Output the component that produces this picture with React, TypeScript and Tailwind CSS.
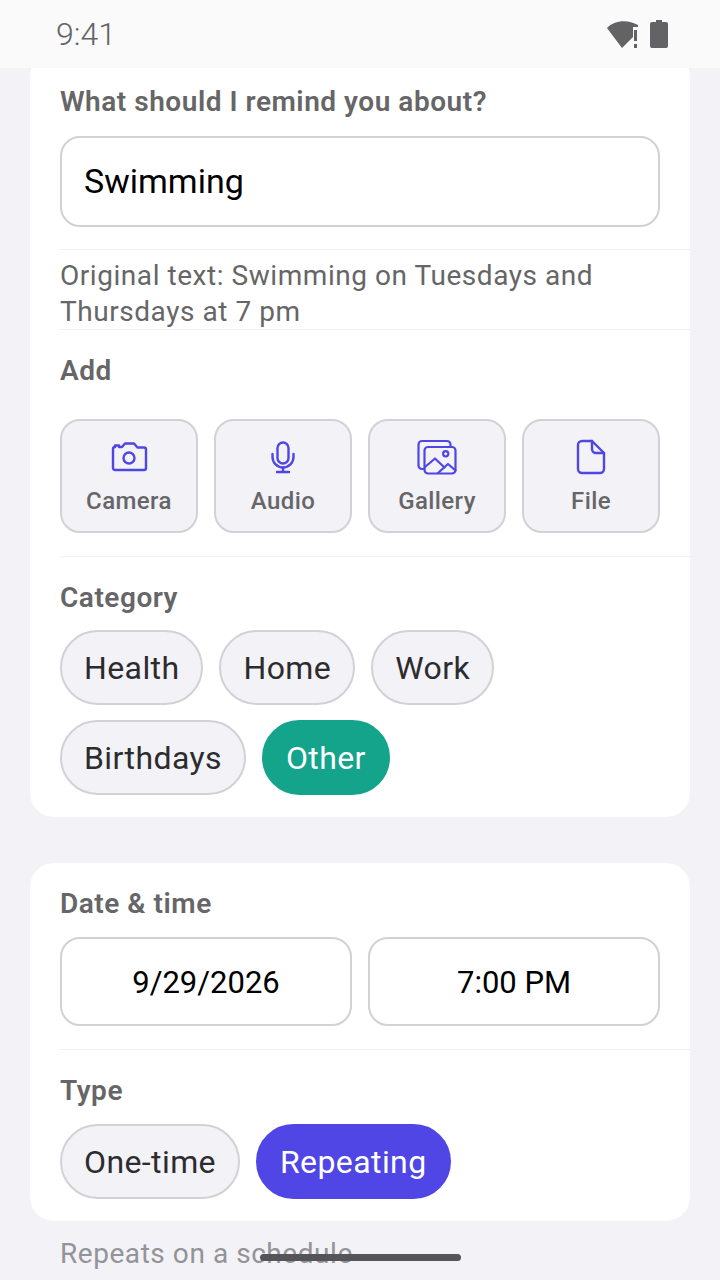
function CameraIcon() {
  return (
    <svg width="40" height="40" viewBox="0 0 40 40" fill="none" stroke="#4f46e5" strokeWidth="2.4" strokeLinejoin="round" strokeLinecap="round">
      <path d="M6 10 V8.5 H10 V10 H13 L16 6.5 H25 L28.5 10.5 H35 A2 2 0 0 1 37 12.5 V31 A2 2 0 0 1 35 33 H6 A2 2 0 0 1 4 31 V12 A2 2 0 0 1 6 10 Z" />
      <circle cx="20" cy="21" r="5.5" />
    </svg>
  );
}

function MicIcon() {
  return (
    <svg width="40" height="40" viewBox="0 0 40 40" fill="none" stroke="#4f46e5" strokeWidth="2.4" strokeLinecap="round">
      <rect x="14.5" y="5.5" width="11" height="21" rx="5.5" />
      <path d="M9.5 17 v3 a10.5 10.5 0 0 0 21 0 v-3" />
      <path d="M20 30.5 V35 M14 35 H26" />
    </svg>
  );
}

function GalleryIcon() {
  return (
    <svg width="40" height="40" viewBox="0 0 40 40" fill="none" stroke="#4f46e5" strokeWidth="2.2" strokeLinejoin="round" strokeLinecap="round">
      <path d="M7.5 32 H5 A3.5 3.5 0 0 1 1.5 28.5 V7.5 A3.5 3.5 0 0 1 5 4 H30 A3.5 3.5 0 0 1 33.5 7.5 V10" />
      <rect x="7.5" y="10" width="31" height="26.5" rx="3.5" />
      <circle cx="28.7" cy="16.7" r="2.6" />
      <path d="M8 30 L18 21.5 L27.5 30.5" />
      <path d="M21 36 L31 27 L38.5 33.5" />
    </svg>
  );
}

function FileIcon() {
  return (
    <svg width="40" height="40" viewBox="0 0 40 40" fill="none" stroke="#4f46e5" strokeWidth="2.4" strokeLinejoin="round" strokeLinecap="round">
      <path d="M11 4 H21 L33 16 V32 A4 4 0 0 1 29 36 H11 A4 4 0 0 1 7 32 V8 A4 4 0 0 1 11 4 Z" />
      <path d="M21 4 V12 A4 4 0 0 0 25 16 H33" />
    </svg>
  );
}

const addOptions = [
  { label: 'Camera', icon: <CameraIcon /> },
  { label: 'Audio', icon: <MicIcon /> },
  { label: 'Gallery', icon: <GalleryIcon /> },
  { label: 'File', icon: <FileIcon /> },
];

function Label({ children }: { children: string }) {
  return <p className="text-[28px] leading-[34px] font-semibold tracking-[0.53px] text-[#666668]">{children}</p>;
}

function Chip({ label, active }: { label: string; active?: string }) {
  return (
    <div
      className={`flex h-[75px] items-center rounded-full border-2 px-[22px] text-[32px] tracking-[0.4px] ${
        active === 'teal'
          ? 'border-[#14a38b] bg-[#14a38b] text-white'
          : active === 'indigo'
            ? 'border-[#4f46e5] bg-[#4f46e5] text-white'
            : 'border-[#d1d1d6] bg-[#f2f2f7] text-[#2c2c2e]'
      }`}
    >
      {label}
    </div>
  );
}

function Divider() {
  return <div className="h-px bg-[#f0f0f2]" />;
}

export default function App() {
  return (
    <div className="relative h-[1280px] w-[720px] overflow-hidden bg-[#f2f2f7] font-['Roboto',sans-serif]">
      <div className="relative z-10 flex h-[68px] items-center justify-between bg-[#fafafa] pr-[52px] pl-[56px]">
        <span className="text-[32px] font-light text-[#636366]">9:41</span>
        <div className="flex items-center gap-[10px]">
          <svg width="34" height="30" viewBox="0 0 34 30" fill="#636366">
            <path d="M1 9 C8 1 22 0 32 6 L32 8 L27 8 L27 18 L16 29 Z" />
            <rect x="28" y="11" width="3" height="11" />
            <rect x="28" y="25" width="3" height="4" />
          </svg>
          <svg width="18" height="30" viewBox="0 0 18 30" fill="#636366">
            <path d="M6 1 H12 V3 H16 Q18 3 18 5 V27 Q18 29 16 29 H2 Q0 29 0 27 V5 Q0 3 2 3 H6 Z" />
          </svg>
        </div>
      </div>

      <div className="mx-[30px] mt-[-16px] rounded-[24px] bg-white pt-[33px] pb-[22px] pl-[30px]">
        <div className="pr-[30px]">
          <Label>What should I remind you about?</Label>
          <div className="mt-[17px] flex h-[91px] items-center rounded-[20px] border-2 border-[#d1d1d6] px-[22px] text-[34px] text-black">
            Swimming
          </div>
        </div>
        <div className="mt-[22px]">
          <Divider />
        </div>
        <p className="h-[79px] pt-[8px] pr-[30px] text-[28px] leading-[36px] tracking-[0.55px] text-[#666668]">
          Original text: Swimming on Tuesdays and Thursdays at 7 pm
        </p>
        <Divider />
        <div className="pt-[24px] pr-[30px]">
          <Label>Add</Label>
          <div className="mt-[31px] grid grid-cols-4 gap-[16px]">
            {addOptions.map(({ label, icon }) => (
              <div
                key={label}
                className="flex h-[114px] flex-col items-center justify-center gap-[9px] rounded-[20px] border-2 border-[#d1d1d6] bg-[#f2f2f7]"
              >
                {icon}
                <span className="text-[24px] leading-[30px] font-medium tracking-[0.4px] text-[#666668]">{label}</span>
              </div>
            ))}
          </div>
        </div>
        <div className="mt-[23px]">
          <Divider />
        </div>
        <div className="pt-[24px] pr-[30px]">
          <Label>Category</Label>
          <div className="mt-[15px] flex flex-wrap gap-x-[16px] gap-y-[15px]">
            <Chip label="Health" />
            <Chip label="Home" />
            <Chip label="Work" />
            <Chip label="Birthdays" />
            <Chip label="Other" active="teal" />
          </div>
        </div>
      </div>

      <div className="mx-[30px] mt-[46px] rounded-[24px] bg-white pt-[24px] pb-[22px] pl-[30px]">
        <div className="pr-[30px]">
          <Label>Date &amp; time</Label>
          <div className="mt-[16px] grid grid-cols-2 gap-[16px]">
            <div className="flex h-[89px] items-center justify-center rounded-[20px] border-2 border-[#d1d1d6] pt-[4px] text-[31px] text-black">
              9/29/2026
            </div>
            <div className="flex h-[89px] items-center justify-center rounded-[20px] border-2 border-[#d1d1d6] pt-[4px] text-[31px] text-black">
              7:00 PM
            </div>
          </div>
        </div>
        <div className="mt-[23px]">
          <Divider />
        </div>
        <div className="pt-[24px] pr-[30px]">
          <Label>Type</Label>
          <div className="mt-[16px] flex gap-[16px]">
            <Chip label="One-time" />
            <Chip label="Repeating" active="indigo" />
          </div>
        </div>
      </div>

      <p className="mt-[16px] pl-[60px] text-[28px] leading-[34px] tracking-[0.55px] text-[#939398]">Repeats on a schedule</p>

      <div className="absolute bottom-[19px] left-[260px] z-20 h-[7px] w-[201px] rounded-full bg-[#555558]" />
    </div>
  );
}
